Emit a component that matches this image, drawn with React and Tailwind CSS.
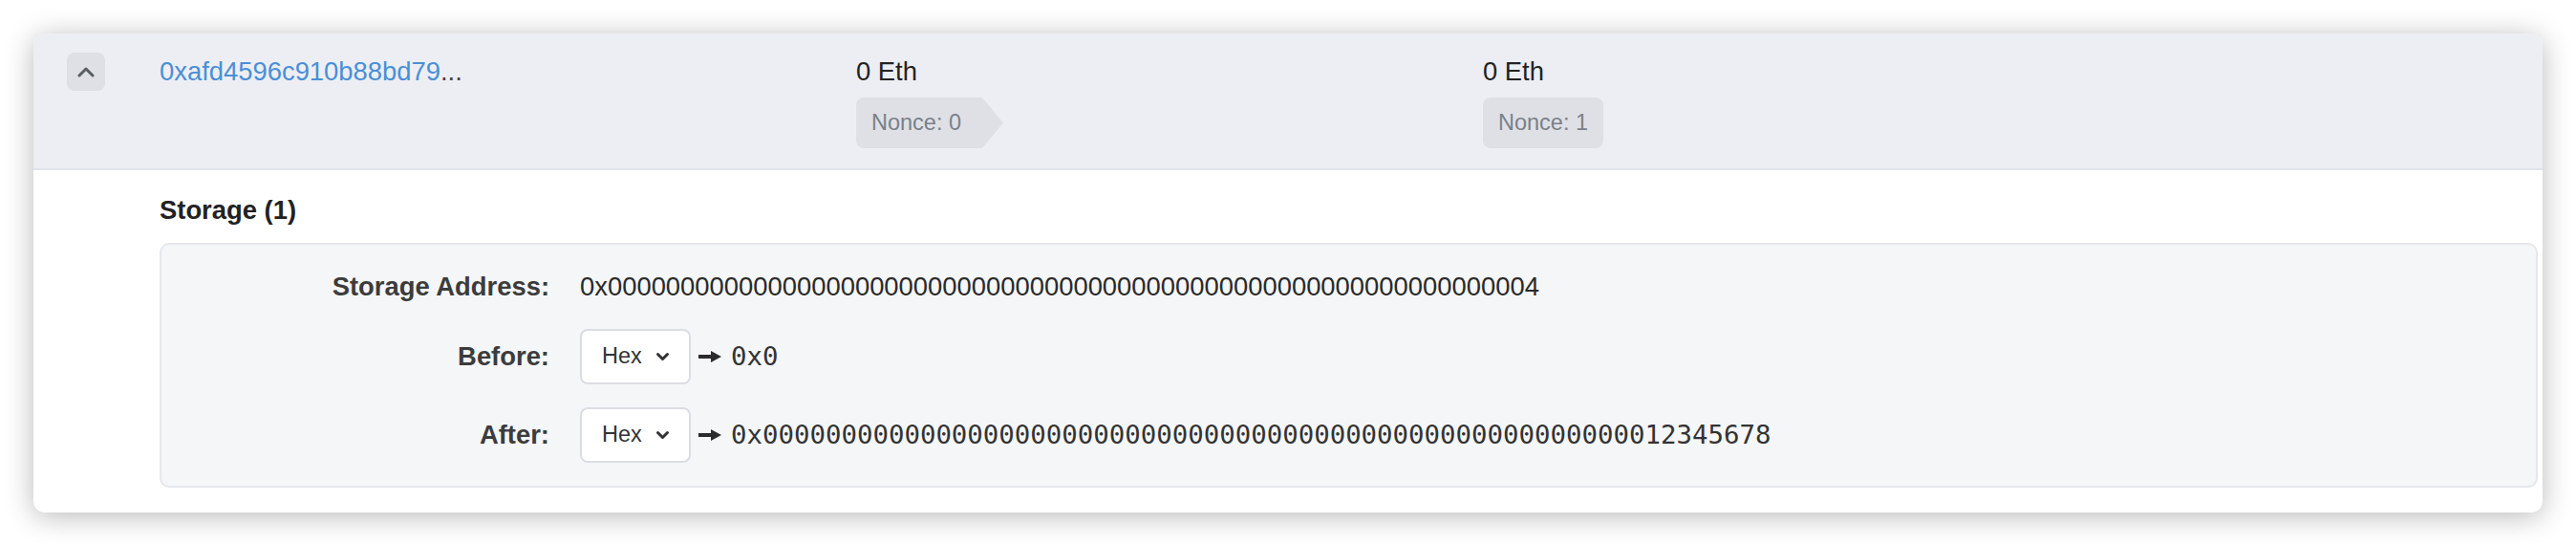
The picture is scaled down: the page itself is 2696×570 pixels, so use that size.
import React from 'react';

const sans = "font-['Liberation_Sans','Helvetica','Arial',sans-serif]";
const mono = "font-['DejaVu_Sans_Mono','Liberation_Mono',monospace]";

const ZEROS = '0'.repeat(64);
const STORAGE_ADDRESS = '0x' + ZEROS.slice(0, 63) + '4';
const AFTER_VALUE = '0x' + ZEROS.slice(0, 56) + '12345678';

function ChevronUp() {
  return (
    <svg width="20" height="12" viewBox="0 0 20 12" fill="none">
      <path d="M3 10l7-7 7 7" stroke="#5a5d63" strokeWidth="3" strokeLinecap="round" strokeLinejoin="round" />
    </svg>
  );
}

function ChevronDown() {
  return (
    <svg width="15" height="10" viewBox="0 0 15 10" fill="none">
      <path d="M2.5 2.5l5 5 5-5" stroke="#333" strokeWidth="3" strokeLinecap="round" strokeLinejoin="round" />
    </svg>
  );
}

function HeavyArrow() {
  return (
    <svg width="24" height="14" viewBox="0 0 24 14">
      <rect x="0" y="5" width="15" height="4" fill="#2b2b2b" />
      <path d="M13 1l11 6-11 6z" fill="#2b2b2b" />
    </svg>
  );
}

// select + arrow + monospaced value
function ValueRow({ label, value }) {
  return (
    <div className="flex items-center">
      <div className="w-[406px] pr-0 text-right font-bold text-[27.4px] text-[#3c3c3c]">{label}</div>
      <div className="ml-[32px] flex items-center">
        <div className="flex h-[58px] w-[116px] items-center justify-between rounded-[8px] border-2 border-[#dcdde3] bg-white pl-[21px] pr-[20px] text-[23.5px] text-[#333]">
          <span>Hex</span>
          <ChevronDown />
        </div>
        <div className="ml-[8px] mr-[10px] flex items-center">
          <HeavyArrow />
        </div>
        <span className={`${mono} text-[27.4px] text-[#333]`}>{value}</span>
      </div>
    </div>
  );
}

export default function App() {
  return (
    <div className={`${sans} min-h-[570px] bg-white p-[35px]`}>
      <div className="overflow-hidden rounded-[12px] bg-white shadow-[0_4px_30px_rgba(0,0,0,0.28)]">
        {/* Account header */}
        <div className="flex items-start border-b-2 border-[#e3e4ea] bg-[#edeef3] px-[35px] pb-[21px] pt-[20px]">
          <button className="flex h-[40px] w-[40px] items-center justify-center rounded-[8px] bg-[#dfe0e6]">
            <ChevronUp />
          </button>
          <div className="ml-[57px] w-[729px] text-[27.4px] leading-[40px]">
            <span className="text-[#4a8fd8]">0xafd4596c910b88bd79</span>
            <span className="text-[#444]">...</span>
          </div>
          <div className="w-[656px]">
            <div className="text-[27.4px] leading-[40px] text-[#222]">0 Eth</div>
            <div className="mt-[7px] flex h-[53px] w-[154px] items-center rounded-l-[8px] bg-[#dfe0e6] pl-[16px] text-[23.5px] text-[#7b808a] [clip-path:polygon(0_0,calc(100%_-_22px)_0,100%_50%,calc(100%_-_22px)_100%,0_100%)]">
              Nonce: 0
            </div>
          </div>
          <div>
            <div className="text-[27.4px] leading-[40px] text-[#222]">0 Eth</div>
            <div className="mt-[7px] flex h-[53px] items-center rounded-[8px] bg-[#dfe0e6] px-[16px] text-[23.5px] text-[#7b808a]">
              Nonce: 1
            </div>
          </div>
        </div>

        {/* Storage changes */}
        <div className="pb-[26px] pl-[132px] pr-[5px] pt-[26px]">
          <div className="text-[27.4px] font-bold leading-[32px] text-[#222]">Storage (1)</div>
          <div className="mt-[18px] flex flex-col gap-[24px] rounded-[10px] border-2 border-[#e6e7ec] bg-[#f5f6f8] pb-[24px] pt-[24px]">
            <div className="flex h-[40px] items-center">
              <div className="w-[406px] text-right font-bold text-[27.4px] text-[#3c3c3c]">Storage Address:</div>
              <div className="ml-[32px] text-[27.4px] text-[#2a2a2a]">{STORAGE_ADDRESS}</div>
            </div>
            <ValueRow label="Before:" value="0x0" />
            <ValueRow label="After:" value={AFTER_VALUE} />
          </div>
        </div>
      </div>
    </div>
  );
}
